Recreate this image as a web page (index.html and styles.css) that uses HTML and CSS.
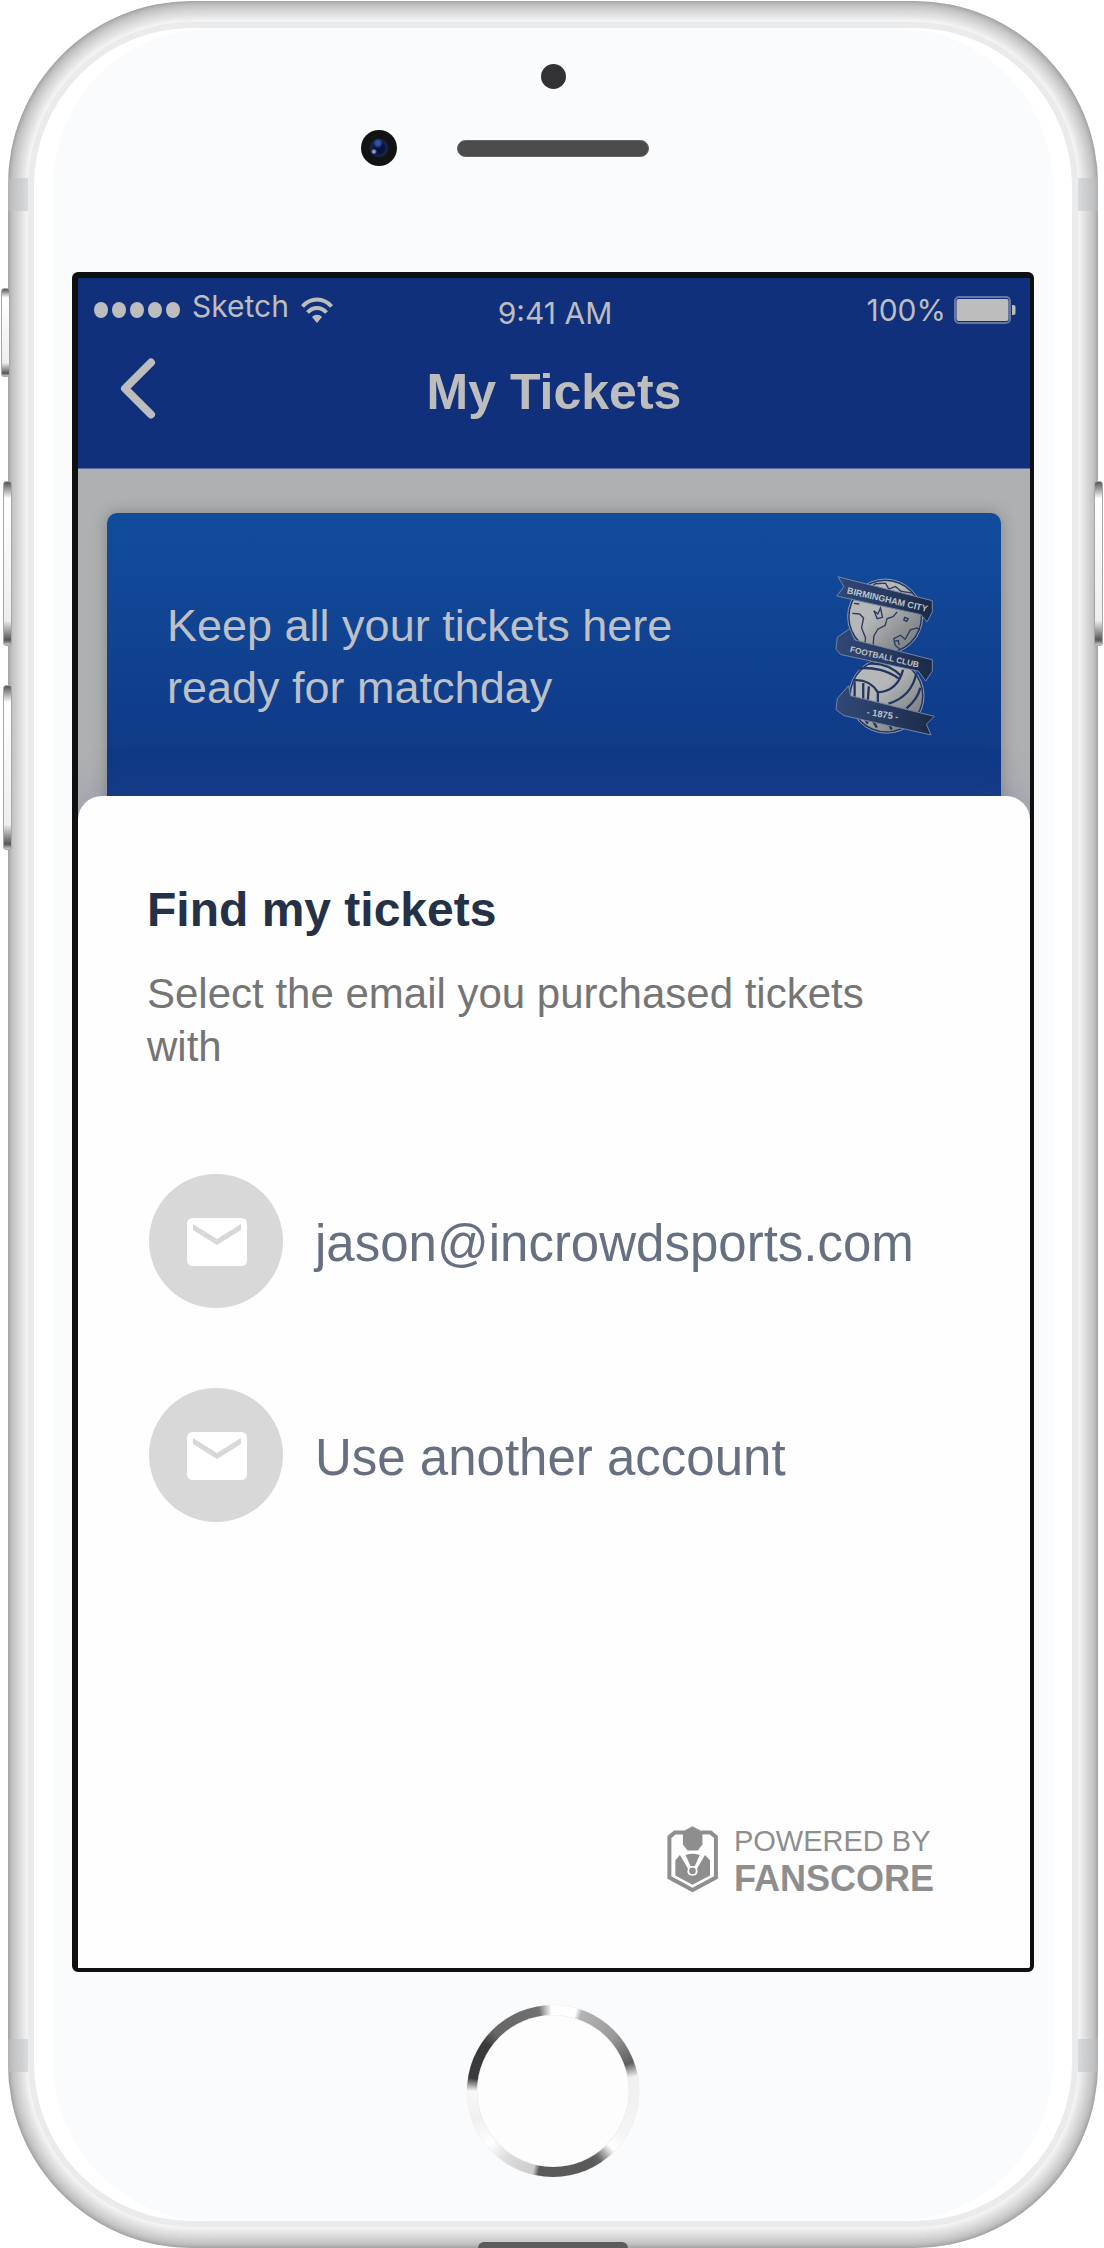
FILE: index.html
```html
<!DOCTYPE html>
<html lang="en">
<head>
<meta charset="utf-8">
<meta name="viewport" content="width=device-width, initial-scale=1">
<title>My Tickets</title>
<link rel="stylesheet" href="styles.css">
</head>
<body>
<div class="phone">
  <span class="key key-mute"></span>
  <span class="key key-up"></span>
  <span class="key key-down"></span>
  <span class="key key-power"></span>
  <span class="band band-tl"></span>
  <span class="band band-tr"></span>
  <span class="band band-bl"></span>
  <span class="band band-br"></span>
  <span class="port"></span>
  <div class="face">
    <div class="hardware">
      <span class="sensor"></span>
      <div class="speaker-row">
        <span class="camera"></span>
        <span class="speaker"></span>
      </div>
    </div>

    <main class="screen">
      <header class="header">
        <div class="status">
          <div class="status-left">
            <span class="signal"><i></i><i></i><i></i><i></i><i></i></span>
            <span class="carrier">Sketch</span>
            <svg class="wifi" viewBox="0 0 32 26" width="32" height="26" aria-hidden="true">
              <g fill="none" stroke="currentColor" stroke-width="4">
                <path d="M1.5 9.5C9.500 .2 22.500 .2 30.500 9.500"/>
                <path d="M6.500 15.500C12 9.500 20 9.500 25.500 15.500"/>
              </g>
              <path d="M16 26l-5-6c2.500-3 7.500-3 10 0z" fill="currentColor"/>
            </svg>
          </div>
          <span class="time">9:41 AM</span>
          <div class="status-right">
            <span>100%</span>
            <svg viewBox="0 0 62 28" width="62" height="28" aria-hidden="true">
              <rect x="1" y="1" width="55" height="26" rx="4" fill="none" stroke="#6675a3" stroke-width="2"/>
              <rect x="2.500" y="3" width="52" height="22" rx="2" fill="currentColor"/>
              <path d="M58 9h1.500q2 0 2 2v6q0 2-2 2H58z" fill="currentColor"/>
            </svg>
          </div>
        </div>
        <nav class="nav">
          <button class="back" type="button" aria-label="Back">
            <svg viewBox="0 0 36 61" width="36" height="61" aria-hidden="true"><path d="M31 4.500L5 30.500L31 56.500" fill="none" stroke="currentColor" stroke-width="8" stroke-linecap="round" stroke-linejoin="round"/></svg>
          </button>
          <h1 class="title">My Tickets</h1>
        </nav>
      </header>

      <section class="backdrop">
        <div class="card">
          <p class="card-text">Keep all your tickets here<br>ready for matchday</p>
          <svg class="crest" viewBox="100 105 304 484" width="101" height="161" role="img" aria-label="Birmingham City Football Club 1875">
            <defs>
              <linearGradient id="ball" x1="0" y1="0" x2="1" y2="1"><stop offset=".4" stop-color="#b5b7b8"/><stop offset="1" stop-color="#6c7075"/></linearGradient>
              <linearGradient id="ribbon" x1="0" y1="0" x2="1" y2="0"><stop offset="0" stop-color="#314776"/><stop offset=".5" stop-color="#283b61"/><stop offset="1" stop-color="#1a2a47"/></linearGradient>
            </defs>
            <g stroke="#8c9ab8" stroke-width="3">
              <circle cx="254" cy="230" r="113" fill="#23365f"/>
              <circle cx="258" cy="468" r="113" fill="#23365f"/>
            </g>
            <circle cx="254" cy="230" r="107" fill="url(#ball)"/>
            <circle cx="258" cy="468" r="107" fill="url(#ball)"/>
            <g fill="none" stroke="#2b3a5e" stroke-width="4">
              <path d="M155 220l22 2 12 12-6 30 12 30-4 34M230 330l-12-18 2-24 12-20 22-12 6-20 18-6 12-14M300 330l-16-14-4-20 20-10 14 12 16-28 20-6 10 8"/>
              <path d="M220 212l12 10 8-18 6 28-16 4zM313 232l10 4-4 8-9-4zM205 145l20-14 30-2 10 18 20-8 16 14 34 6M160 190l16 2M284 304l10-2 2 14"/>
            </g>
            <g fill="none" stroke="#23365f" stroke-width="7">
              <path d="M170 386c48-6 94 8 124 30M158 422c34-4 60 12 74 36 34-2 64-22 76-68M232 458v44M264 492c46-14 74-42 84-92M318 506c20-16 36-38 42-62M162 426v60M188 430v58M204 372c46-4 76 14 100 38M205 440l-4 52M215 540l14 24M262 548l12 22M184 526l18 26"/>
            </g>
            <g fill="url(#ribbon)" stroke="#7483a3" stroke-width="3" stroke-linejoin="round">
              <path d="M112 110l284 72v34l-16 30-18-22-254-56 22-28z"/>
              <path d="M148 266l14 34 234 60v34l-20 30-22-30-234-50-14-16 4-36z"/>
              <path d="M144 438l6 30 252 62-24 24 14 32-262-58-24-18 4-34z"/>
            </g>
            <g class="crest-text" fill="#bfc3ca">
              <text x="138" y="160" font-size="27" transform="rotate(13 138 160)">BIRMINGHAM CITY</text>
              <text x="147" y="336" font-size="25" transform="rotate(13 147 336)">FOOTBALL CLUB</text>
              <text x="197" y="526" font-size="28" transform="rotate(9 197 526)">- 1875 -</text>
            </g>
          </svg>
        </div>
      </section>

      <section class="sheet">
        <h2 class="sheet-title">Find my tickets</h2>
        <p class="sheet-sub">Select the email you purchased tickets with</p>
        <div class="accounts">
          <button class="account" type="button">
            <span class="avatar"><svg viewBox="0 0 60 48" width="60" height="48" aria-hidden="true"><path fill="#fff" fill-rule="evenodd" d="M6 0h48q6 0 6 6v36q0 6-6 6H6q-6 0-6-6V6q0-6 6-6zM6 6v6l24 15 24-15V6L30 21z"/></svg></span>
            <span class="account-name">jason@incrowdsports.com</span>
          </button>
          <button class="account" type="button">
            <span class="avatar"><svg viewBox="0 0 60 48" width="60" height="48" aria-hidden="true"><path fill="#fff" fill-rule="evenodd" d="M6 0h48q6 0 6 6v36q0 6-6 6H6q-6 0-6-6V6q0-6 6-6zM6 6v6l24 15 24-15V6L30 21z"/></svg></span>
            <span class="account-name">Use another account</span>
          </button>
        </div>
        <footer class="powered">
          <svg viewBox="80 76 154 200" width="51" height="66" aria-hidden="true">
            <path d="M132 96H103L87 109V232L157 270L228 232V109L212 96H183" fill="none" stroke="#8e8e8e" stroke-width="12"/>
            <path d="M130 91L157 77L184 91L187 98V132L173 150H142L128 132V98z" fill="#8e8e8e"/>
            <path d="M105 180L119 164L143 205Q137 226 157 227Q177 226 171 205L195 164L210 180V226L157 254L105 226z" fill="#8e8e8e"/>
            <path d="M136 164Q157 156 179 164L164 197H151z" fill="#8e8e8e"/>
            <circle cx="157" cy="212" r="10" fill="#8e8e8e"/>
          </svg>
          <p class="powered-text"><span>POWERED BY</span><strong>FANSCORE</strong></p>
        </footer>
      </section>
    </main>

    <button class="home" type="button" aria-label="Home"></button>
  </div>
</div>
</body>
</html>
```
FILE: styles.css
```css
* { box-sizing: border-box; }

body {
  margin: 0;
  background: #fff;
  font-family: "Liberation Sans", Arial, sans-serif;
}

h1, h2, p { margin: 0; }

button {
  margin: 0;
  padding: 0;
  border: 0;
  background: none;
  font: inherit;
  color: inherit;
  text-align: left;
}

svg { display: block; flex: none; }

/* Device body */
.phone {
  position: relative;
  display: flow-root;
  margin: 1px 6px 0 8px;
  padding: 21px 20px;
  border-radius: 184px;
  background: #f4f4f4;
  box-shadow: inset 0 0 4px #8e908f, inset 0 0 20px 6px rgba(0, 0, 0, .36);
}

.face {
  display: flex;
  flex-direction: column;
  padding: 36px 38px 44px;
  border: 6px solid #e9ebed;
  border-radius: 164px;
  background: #fafbfd;
  box-shadow: inset 19px 0 #fff, inset -19px 0 #fff, 0 0 4px 2px #f6f6f6;
}

.key {
  position: absolute;
  width: 9px;
  height: 165px;
  border-radius: 3px;
  border: 1px solid #a8a8a8;
  background: linear-gradient(#555, #fff 10%, #eee 85%, #555 97%, #ccc);
}
.key-mute { left: -7px; top: 287px; height: 89px; }
.key-up { left: -5px; top: 480px; }
.key-down { left: -5px; top: 684px; }
.key-power { right: -5px; top: 480px; }

.band {
  position: absolute;
  width: 20px;
  height: 33px;
  background: rgba(190, 192, 194, .5);
}
.band-tl { left: 0; top: 177px; }
.band-tr { right: 0; top: 177px; }
.band-bl { left: 0; bottom: 176px; }
.band-br { right: 0; bottom: 176px; }

.port {
  position: absolute;
  left: 50%;
  bottom: 0;
  width: 150px;
  height: 6px;
  margin-left: -75px;
  border-radius: 12px 12px 0 0;
  background: #5c5c5c;
}

.hardware {
  display: flex;
  flex-direction: column;
  align-items: center;
  gap: 41px;
  padding-bottom: 106px;
}

.sensor {
  width: 25px;
  height: 25px;
  border-radius: 50%;
  background: #323234;
}

.speaker-row {
  display: grid;
  grid-template-columns: 1fr auto 1fr;
  align-items: center;
  gap: 60px;
  width: 100%;
}

.camera {
  justify-self: end;
  width: 36px;
  height: 36px;
  border-radius: 50%;
  background:
    radial-gradient(circle at 36% 60%, #8fa2cc 0 1px, transparent 3px),
    radial-gradient(circle at 47% 37%, #2d55a8 0 2px, transparent 5px),
    radial-gradient(circle, #071240 0 5px, #1b2546 8px, #121314 10px);
}

.speaker {
  width: 192px;
  height: 17px;
  border-radius: 9px;
  background: #4b4b4b;
  border: 1px solid #636363;
}

/* Screen */
.screen {
  border: solid #101010;
  border-width: 6px 4px 4px 6px;
  border-radius: 6px;
  background: #afb0b2;
  overflow: hidden;
}

.header {
  border-bottom: 1px solid #5a6ca0;
  background: #11307c;
  color: #bdbdbd;
}

.status {
  display: grid;
  grid-template-columns: 1fr auto 1fr;
  align-items: center;
  height: 64px;
  padding: 0 14px 0 16px;
  font: 400 30px/36px Inter, "Liberation Sans", sans-serif;
}

.status-left, .status-right {
  display: flex;
  align-items: center;
  gap: 12px;
}
.status-right { justify-content: flex-end; gap: 8px; }

.carrier { padding-bottom: 8px; }
.time { padding-top: 6px; }

.signal { display: flex; gap: 4px; }
.signal i {
  width: 14px;
  height: 16px;
  border-radius: 50%;
  background: currentColor;
}

.nav {
  display: grid;
  grid-template-columns: 1fr auto 1fr;
  align-items: center;
  padding: 16px 42px 49px;
}

.back { justify-self: start; }

.title {
  padding-top: 6px;
  font-size: 50px;
  line-height: 54px;
}

.backdrop { padding: 44px 29px 0; }

.card {
  display: flex;
  align-items: center;
  justify-content: space-between;
  padding: 62px 66px 84px 60px;
  border-radius: 10px 10px 0 0;
  background: linear-gradient(#114d9c, #0f3684 92%);
  box-shadow: 0 0 16px rgba(0, 0, 0, .25);
  color: #bdc0c6;
}

.card-text {
  padding-top: 2px;
  font-size: 45px;
  line-height: 62px;
}

.crest-text {
  font-family: "Liberation Sans", Arial, sans-serif;
  font-weight: 700;
}

/* Account picker */
.sheet {
  position: relative;
  margin-top: -24px;
  padding: 86px 96px 69px 69px;
  border-radius: 24px 24px 0 0;
  background: #fefefe;
  box-shadow: 0 0 48px rgba(70, 95, 150, .3);
}

.sheet-title {
  font-size: 48px;
  line-height: 56px;
  color: #243147;
}

.sheet-sub {
  margin-top: 29px;
  font-size: 42px;
  line-height: 53px;
  color: #757575;
}

.accounts {
  display: flex;
  flex-direction: column;
  gap: 80px;
  margin-top: 101px;
  padding-left: 2px;
}

.account {
  display: flex;
  align-items: center;
  gap: 32px;
  font-size: 51px;
  line-height: 60px;
  color: #677081;
}

.account-name { padding-top: 5px; }

.avatar {
  display: grid;
  place-items: center;
  flex: none;
  width: 134px;
  height: 134px;
  padding: 2px 0 0 2px;
  border-radius: 50%;
  background: #d8d8d8;
}

.powered {
  display: flex;
  justify-content: flex-end;
  align-items: flex-start;
  gap: 16px;
  margin-top: 304px;
  color: #8e8e8e;
}

.powered-text {
  display: flex;
  flex-direction: column;
  gap: 4px;
  padding-top: 1px;
  font-size: 29px;
  line-height: 28px;
}

.powered-text strong {
  font-size: 36px;
  line-height: 40px;
}

.home {
  align-self: center;
  width: 172px;
  height: 172px;
  margin-top: 33px;
  border: 10px solid transparent;
  border-radius: 50%;
  background:
    linear-gradient(#fdfdfe, #fdfdfe) padding-box,
    conic-gradient(#fff 0 16deg, #b4b4b4 20deg, #999 48deg, #5e5e5e 70deg, #f0f0f0 80deg, #f4f4f4 120deg, #fff 134deg, #666 146deg, #5a5a5a 150deg 190deg, #ccc 194deg, #ddd 215deg, #fff 230deg, #f0f0f0 250deg, #f8f8f8 270deg, #3a3a3c 279deg 305deg, #666 315deg, #707070 350deg, #fff 359deg) border-box;
  box-shadow: inset 0 0 1px #ccc, 0 0 1px #ccc;
}
```
